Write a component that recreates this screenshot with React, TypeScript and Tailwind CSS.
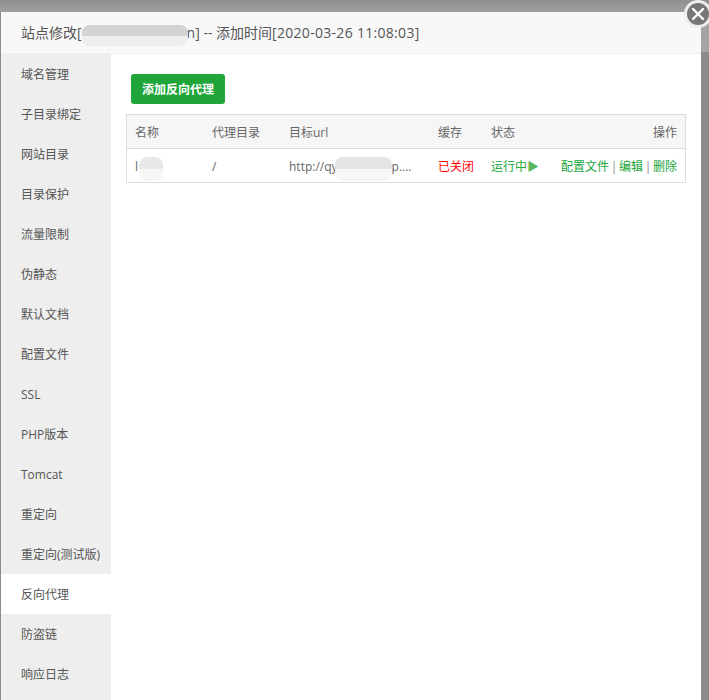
const menu = ["域名管理","子目录绑定","网站目录","目录保护","流量限制","伪静态","默认文档","配置文件","SSL","PHP版本","Tomcat","重定向","重定向(测试版)","反向代理","防盗链","响应日志"];
const font = { fontFamily: '"Open Sans","Noto Sans CJK SC",sans-serif' };

function Blur({ className }: { className: string }) {
  return <span className={"absolute rounded-[8px] blur-[0.6px] " + className} />;
}

export default function App() {
  return (
    <div className="relative w-[709px] h-[700px] overflow-hidden bg-[#8c8c8c] pl-px pt-3" style={font}>
      <div className="absolute left-0 top-0 w-full h-[12px] bg-gradient-to-b from-[#8f8f8f] to-[#a0a0a0]" />
      <div className="absolute left-[701px] top-[12px] w-[8px] h-[40px] bg-gradient-to-b from-[#a0a0a0] to-[#a6a6a6]" />
      <div className="relative w-[700px] h-[688px] bg-white flex flex-col">
        <div className="relative h-[42px] shrink-0 bg-[#f8f8f8] border-b border-[#eeeeee] pl-5 text-[14px] leading-[41px] text-[#555555] whitespace-pre">
          站点修改[<span className="inline-block w-[105px]" />n] -- 添加时间<span className="tracking-[0.3px]">[2020-03-26 11:08:03]</span>
          <Blur className="left-[81px] top-[13px] w-[106px] h-[21px] bg-[linear-gradient(#d3d3d3_52%,#eeeeee_52%)]" />
        </div>
        <div className="flex flex-1 min-h-0">
          <div className="w-[110px] shrink-0 bg-[#eeeeee] text-[12px] text-[#555555]">
            {menu.map((m) => (
              <div key={m} className={"h-10 pl-5 leading-[42px] whitespace-nowrap " + (m === "反向代理" ? "bg-white" : "")}>{m}</div>
            ))}
          </div>
          <div className="flex-1 pl-[15px] pr-[15px] pt-[20px]">
            <button className="ml-[5px] block w-[94px] h-[30px] pt-px rounded-[3px] bg-[#20a53a] text-white text-[12px] font-bold">添加反向代理</button>
            <div className="mt-2.5 w-[560px] border border-[#dddddd] text-[12px] text-[#666666]">
              <div className="h-[34px] bg-[#f6f6f6] border-b border-[#dddddd] leading-[35px] flex">
                <span className="w-[85px] pl-2 shrink-0">名称</span>
                <span className="w-[77px] shrink-0">代理目录</span>
                <span className="w-[149px] shrink-0">目标url</span>
                <span className="w-[53px] shrink-0">缓存</span>
                <span className="flex-1">状态</span>
                <span className="pr-2">操作</span>
              </div>
              <div className="relative h-[33px] leading-[35px] flex">
                <span className="w-[85px] pl-2 shrink-0">l</span>
                <span className="w-[77px] shrink-0">/</span>
                <span className="w-[149px] shrink-0 whitespace-nowrap">http://qy<span className="inline-block w-[54px]" />p....</span>
                <span className="w-[53px] shrink-0 text-[#ff0000]">已关闭</span>
                <span className="flex-1 text-[#20a53a]">运行中<span className="text-[#5cb85c]">▶</span></span>
                <span className="pr-2 text-[#20a53a] flex">配置文件<span className="w-[10px] text-center text-[#888888]">|</span>编辑<span className="w-[10px] text-center text-[#888888]">|</span>删除</span>
                <Blur className="left-[12px] top-[8px] w-[24px] h-[24px] bg-[linear-gradient(#e8e8e8_50%,#f6f6f6_50%)]" />
                <Blur className="left-[208px] top-[8px] w-[57px] h-[24px] bg-[linear-gradient(#e4e4e4_50%,#f6f6f6_50%)]" />
              </div>
            </div>
          </div>
        </div>
      </div>
      <div className="absolute left-[684px] top-0 w-[28px] h-[28px] rounded-full bg-[#777777] border-[3px] border-[#eeeeee] flex items-center justify-center">
        <svg width="14" height="14" viewBox="0 0 14 14"><path d="M2 2L12 12M12 2L2 12" stroke="#fff" strokeWidth="2.4" strokeLinecap="round" /></svg>
      </div>
    </div>
  );
}
